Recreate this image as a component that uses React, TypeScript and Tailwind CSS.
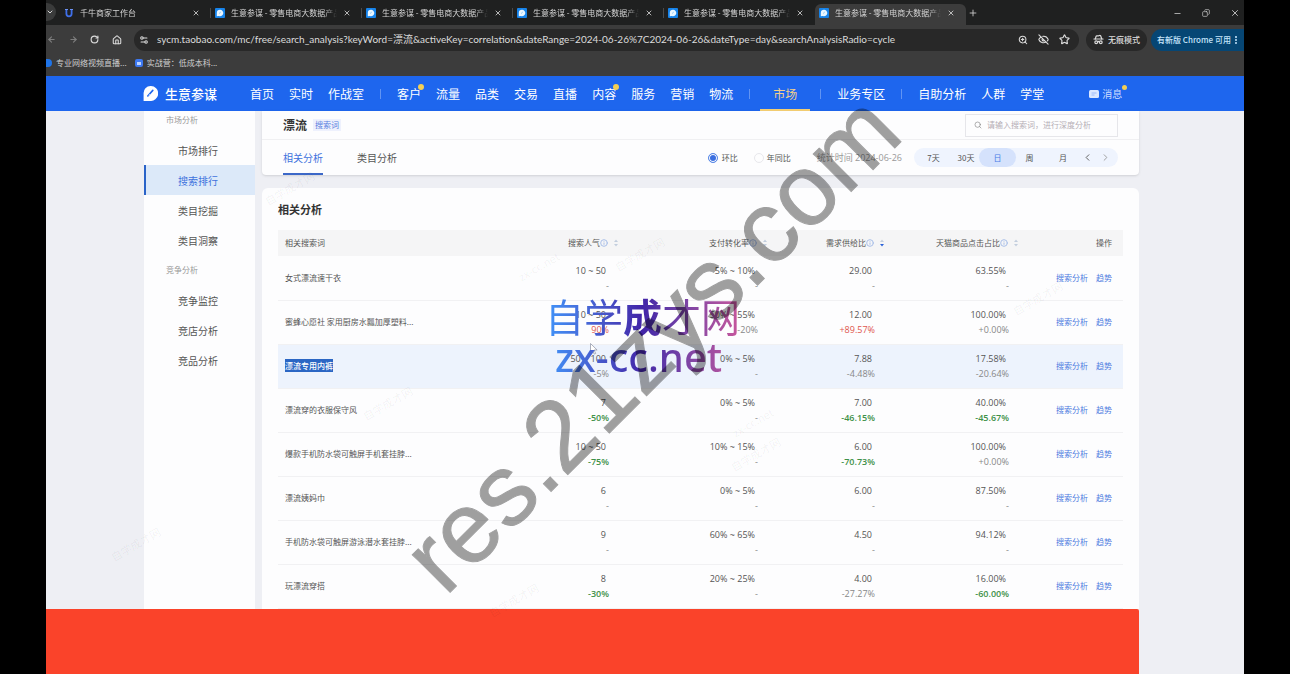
import {
  ArrowLeft,
  ArrowRight,
  ChevronDown,
  ChevronLeft,
  ChevronRight,
  Copy,
  EllipsisVertical,
  EyeOff,
  HatGlasses,
  House,
  Info,
  Minus,
  Plus,
  RotateCw,
  Search,
  Settings2,
  Star,
  X,
  ZoomIn,
} from "lucide-react";

interface IDelta {
  text: string;
  tone?: "up" | "down";
}

interface IRow {
  keyword: string;
  selected?: boolean;
  cells: [string, IDelta][];
}

interface INavItem {
  label: string;
  dot?: boolean;
  active?: boolean;
  divider?: boolean;
}

const none: IDelta = { text: "-" };

const tabs = [
  "千牛商家工作台",
  "生意参谋 - 零售电商大数据产品平台",
  "生意参谋 - 零售电商大数据产品平台",
  "生意参谋 - 零售电商大数据产品平台",
  "生意参谋 - 零售电商大数据产品平台",
  "生意参谋 - 零售电商大数据产品平台",
];

const navItems: INavItem[] = [
  { label: "首页" },
  { label: "实时" },
  { label: "作战室", divider: true },
  { label: "客户", dot: true },
  { label: "流量" },
  { label: "品类" },
  { label: "交易" },
  { label: "直播" },
  { label: "内容", dot: true },
  { label: "服务" },
  { label: "营销" },
  { label: "物流", divider: true },
  { label: "市场", active: true, divider: true },
  { label: "业务专区", divider: true },
  { label: "自助分析" },
  { label: "人群" },
  { label: "学堂" },
];

const columns = ["搜索人气", "支付转化率", "需求供给比", "天猫商品点击占比"];

const rows: IRow[] = [
  {
    keyword: "女式漂流速干衣",
    cells: [["10 ~ 50", none], ["5% ~ 10%", none], ["29.00", none], ["63.55%", none]],
  },
  {
    keyword: "蜜蜂心愿社 家用厨房水瓢加厚塑料...",
    cells: [
      ["10 ~ 50", { text: "90%", tone: "up" }],
      ["50% ~ 55%", { text: "-20%" }],
      ["12.00", { text: "+89.57%", tone: "up" }],
      ["100.00%", { text: "+0.00%" }],
    ],
  },
  {
    keyword: "漂流专用内裤",
    selected: true,
    cells: [
      ["50 ~ 100", { text: "-5%" }],
      ["0% ~ 5%", none],
      ["7.88", { text: "-4.48%" }],
      ["17.58%", { text: "-20.64%" }],
    ],
  },
  {
    keyword: "漂流穿的衣服保守风",
    cells: [
      ["7", { text: "-50%", tone: "down" }],
      ["0% ~ 5%", none],
      ["7.00", { text: "-46.15%", tone: "down" }],
      ["40.00%", { text: "-45.67%", tone: "down" }],
    ],
  },
  {
    keyword: "爆款手机防水袋可触屏手机套挂脖...",
    cells: [
      ["10 ~ 50", { text: "-75%", tone: "down" }],
      ["10% ~ 15%", none],
      ["6.00", { text: "-70.73%", tone: "down" }],
      ["100.00%", { text: "+0.00%" }],
    ],
  },
  {
    keyword: "漂流姨妈巾",
    cells: [["6", none], ["0% ~ 5%", none], ["6.00", none], ["87.50%", none]],
  },
  {
    keyword: "手机防水袋可触屏游泳潜水套挂脖...",
    cells: [["9", none], ["60% ~ 65%", none], ["4.50", none], ["94.12%", none]],
  },
  {
    keyword: "玩漂流穿搭",
    cells: [
      ["8", { text: "-30%", tone: "down" }],
      ["20% ~ 25%", none],
      ["4.00", { text: "-27.27%" }],
      ["16.00%", { text: "-60.00%", tone: "down" }],
    ],
  },
];

const faintMarks = [
  { text: "zx-cc.net", left: 516, top: 258 },
  { text: "自学成才网", left: 612, top: 246 },
  { text: "自学成才网", left: 360, top: 395 },
  { text: "自学成才网", left: 728, top: 446 },
  { text: "zx-cc.net", left: 730, top: 414 },
  { text: "自学成才网", left: 108, top: 536 },
  { text: "自学成才网", left: 486, top: 592 },
  { text: "自学成才网", left: 1010, top: 290 },
  { text: "自学成才网", left: 262, top: 180 },
];

const ShopIcon = () => (
  <svg viewBox="0 0 10 10" className="size-[10px] shrink-0">
    <rect width="10" height="10" rx="1" fill="#1683ea" />
    <path d="M5 1.8a3.2 3.2 0 1 1-1 6.2L1.8 8.2V5A3.2 3.2 0 0 1 5 1.8Z" fill="#e9f6ff" />
    <path d="M4 5.6 5.8 4" stroke="#7cc0f7" strokeWidth="0.8" />
  </svg>
);

const QianniuIcon = () => (
  <svg viewBox="0 0 10 10" className="size-[10px] shrink-0" fill="none">
    <path d="M2.4 1.5v4.2a2.6 2.6 0 0 0 5.2 0V1.5" stroke="#3f6fe8" strokeWidth="1.8" />
    <path d="M1 1.5h3M6 1.5h3" stroke="#6d93f5" strokeWidth="1.2" />
  </svg>
);

const SortIcon = ({ active }: { active?: boolean }) => (
  <svg viewBox="0 0 6 8" className="h-2 w-[6px] shrink-0">
    <path d="M3 0.5 5 3H1Z" fill="#c3cede" />
    <path d="M3 7.5 5 5H1Z" fill={active ? "#2b62d9" : "#c3cede"} />
  </svg>
);

const TabStrip = () => (
  <div className="flex h-[25px] items-end bg-[#1f2020] text-[8px] text-[#d4d4d4]">
    <button aria-label="搜索标签页" className="mb-1 mr-1 flex h-[18px] w-[10px] items-center rounded-r-full bg-[#3a3b3b]">
      <ChevronDown size={8} strokeWidth={3} />
    </button>
    {tabs.map((title, i) => {
      const active = i === tabs.length - 1;
      return (
        <div
          key={i}
          className={
            "flex h-[21px] min-w-0 max-w-[151px] flex-1 items-center pb-[3px] pl-1 " +
            (active ? "rounded-t-md bg-[#3c3c3c]" : "")
          }
        >
          {i === 0 ? <QianniuIcon /> : <ShopIcon />}
          <span className="ml-[6px] min-w-0 flex-1 overflow-hidden whitespace-nowrap [mask-image:linear-gradient(to_right,black_88%,transparent)]">
            {title}
          </span>
          <button aria-label="关闭" className="ml-[6px] mr-[10px] shrink-0">
            <X size={8} strokeWidth={2.5} />
          </button>
          <i className={"h-[10px] w-px " + (active || i === tabs.length - 2 ? "" : "bg-[#4a4a4a]")} />
        </div>
      );
    })}
    <button aria-label="新标签页" className="mb-[7px] ml-[2px]">
      <Plus size={10} />
    </button>
    <div className="mb-[7px] ml-auto flex items-center gap-5 pr-1">
      <button aria-label="最小化"><Minus size={9} /></button>
      <button aria-label="还原"><Copy size={8} className="-scale-x-100" /></button>
      <button aria-label="关闭窗口"><X size={10} /></button>
    </div>
  </div>
);

const Toolbar = () => (
  <div className="flex h-[29px] items-center bg-[#3c3c3c] text-[#dcdcdc]">
    <div className="flex w-[88px] shrink-0 items-center justify-between pl-px pr-3">
      <button aria-label="后退" className="text-[#7d7d7d]"><ArrowLeft size={9} strokeWidth={3} /></button>
      <button aria-label="前进" className="text-[#7d7d7d]"><ArrowRight size={9} strokeWidth={3} /></button>
      <button aria-label="重新加载"><RotateCw size={9} strokeWidth={3} /></button>
      <button aria-label="主页"><House size={10} strokeWidth={2.5} /></button>
    </div>
    <div className="flex h-[22px] min-w-0 flex-1 items-center rounded-full bg-[#282828] px-[5px]">
      <Settings2 size={10} strokeWidth={2.5} className="shrink-0" />
      <input
        aria-label="地址"
        readOnly
        value="sycm.taobao.com/mc/free/search_analysis?keyWord=漂流&activeKey=correlation&dateRange=2024-06-26%7C2024-06-26&dateType=day&searchAnalysisRadio=cycle"
        className="ml-2 min-w-0 flex-1 bg-transparent font-[Lato,'Noto_Sans_CJK_SC',sans-serif] text-[10px] outline-none"
      />
      <div className="flex shrink-0 gap-[10px] pr-1">
        <button aria-label="缩放"><ZoomIn size={10} strokeWidth={2.5} /></button>
        <button aria-label="第三方 Cookie"><EyeOff size={11} strokeWidth={2.5} /></button>
        <button aria-label="收藏"><Star size={11} strokeWidth={2.5} /></button>
      </div>
    </div>
    <button className="ml-[7px] flex h-[22px] w-[61px] shrink-0 items-center gap-1 rounded-full bg-[#282828] pl-[7px] text-[8px] font-medium">
      <HatGlasses size={11} strokeWidth={2.5} />
      无痕模式
    </button>
    <button className="ml-1 flex h-[22px] w-[93px] shrink-0 items-center justify-between whitespace-nowrap rounded-l-full bg-[#064674] pl-[6px] pr-[3px] text-[8px] font-medium text-[#c5e4fb]">
      有新版 Chrome 可用
      <EllipsisVertical size={10} strokeWidth={3} />
    </button>
  </div>
);

const Bookmarks = () => (
  <div className="flex h-[22px] items-center bg-[#3c3c3c] pb-1 text-[8px] text-[#cfcfcf]">
    <a href="#live" className="flex items-center">
      <i className="mr-1 h-2 w-[6px] rounded-r-full bg-[#1f74e8]" />
      专业网络视频直播...
    </a>
    <a href="#camp" className="ml-2 flex items-center gap-1">
      <i className="flex size-2 items-center justify-center rounded-[2px] bg-[#3c78f0]">
        <i className="h-[3px] w-1 bg-[#bcd3ff]" />
      </i>
      实战营：低成本科...
    </a>
  </div>
);

const Navbar = () => (
  <nav className="flex h-[35px] items-center whitespace-nowrap bg-[#1e66ee] pl-[97px] text-[12px] text-white">
    <a href="#home" className="flex w-[107px] shrink-0 items-center gap-[7px] text-[13px] font-medium">
      <svg viewBox="0 0 15 15" className="size-[15px]">
        <path d="M7.5 0a7.5 7.5 0 1 1-1 14.9L0.6 15V7.5A7 7 0 0 1 7.5 0Z" fill="#fff" />
        <path d="m4.8 10 5-5.6" stroke="#1e66ee" strokeWidth="1.6" strokeLinecap="round" />
        <path d="m5.8 9.4 1.2-1.3" stroke="#fff" strokeWidth="0.7" />
      </svg>
      生意参谋
    </a>
    <div className="flex h-full items-center gap-[15px]">
      {navItems.map(({ label, dot, active, divider }) => (
        <div key={label} className="flex h-full items-center">
          <a
            href="#nav"
            className={
              active
                ? "-mx-[6px] flex h-full w-[50px] items-center justify-center border-b-2 border-[#f5cf73] pt-[2px] text-[#f3d08a]"
                : "relative"
            }
          >
            {label}
            {dot && <i className="absolute -right-[3px] -top-px size-[6px] rounded-full bg-[#f3cf55]" />}
          </a>
          {divider && <i className="ml-4 mr-px h-[10px] w-px bg-white/30" />}
        </div>
      ))}
    </div>
    <a href="#msg" className="relative ml-[45px] flex items-center gap-[3px] text-[10px] text-[#cfdeff]">
      <svg viewBox="0 0 10 8" className="h-2 w-[10px]">
        <rect width="10" height="8" rx="1.5" fill="#dbe7ff" />
        <path d="M2.5 3h5M2.5 5h3" stroke="#8db0f7" strokeWidth="0.8" />
      </svg>
      消息
      <i className="absolute -right-[5px] -top-[1px] size-[5px] rounded-full bg-[#f3cf55]" />
    </a>
  </nav>
);

const SideItem = ({ label, active }: { label: string; active?: boolean }) => (
  <a
    href="#side"
    className={
      "flex h-[30px] items-center border-l-2 pl-8 text-[10px] " +
      (active ? "border-[#2a63c8] bg-[#dce9f9] text-[#3f72dd]" : "border-transparent text-[#555]")
    }
  >
    {label}
  </a>
);

const Sidebar = () => (
  <aside className="w-[111px] shrink-0 bg-[#fdfdfe]">
    <h4 className="h-6 pl-[22px] text-[8px] leading-[18px] text-[#999]">市场分析</h4>
    <SideItem label="市场排行" />
    <SideItem label="搜索排行" active />
    <SideItem label="类目挖掘" />
    <SideItem label="类目洞察" />
    <h4 className="h-[30px] pl-[22px] text-[8px] leading-[30px] text-[#999]">竞争分析</h4>
    <SideItem label="竞争监控" />
    <SideItem label="竞店分析" />
    <SideItem label="竞品分析" />
  </aside>
);

const FilterCard = () => (
  <section className="rounded-b-sm bg-[#fdfdfe] shadow-sm">
    <div className="flex h-[29px] items-center border-b border-[#f0f0f2] px-[21px]">
      <h1 className="text-[12px] font-bold text-[#333]">漂流</h1>
      <span className="ml-[6px] bg-[#eef1fd] px-[2px] text-[8px] leading-3 text-[#5a7fe0]">搜索词</span>
      <label className="ml-auto flex h-[23px] w-[153px] items-center gap-[5px] border border-[#e6e6ea] pl-2">
        <Search size={8} className="text-[#888]" />
        <input
          aria-label="搜索词"
          placeholder="请输入搜索词，进行深度分析"
          className="min-w-0 flex-1 bg-transparent text-[8px] outline-none placeholder:text-[#b5adb5]"
        />
      </label>
    </div>
    <div className="flex h-[35px] items-center px-[21px] text-[10px] text-[#555]">
      <button className="h-full border-b-2 border-[#3c68c8] pt-[2px] text-[#3f72dd]">相关分析</button>
      <button className="ml-[34px]">类目分析</button>
      <div className="ml-auto flex items-center text-[8px]">
        <label className="flex items-center gap-1">
          <input
            type="radio"
            name="cmp"
            defaultChecked
            className="size-[10px] appearance-none rounded-full border border-[#5b8be8] checked:bg-[#3b6fe0] checked:shadow-[inset_0_0_0_1px_#fff]"
          />
          环比
        </label>
        <label className="ml-4 flex items-center gap-[3px]">
          <input type="radio" name="cmp" className="size-[10px] appearance-none rounded-full border border-[#e8e8ec]" />
          年同比
        </label>
        <span className="ml-[26px] font-['Open_Sans','Noto_Sans_CJK_SC',sans-serif] text-[9px] text-[#999]">
          统计时间 2024-06-26
        </span>
        <div className="ml-3 flex h-[19px] w-[204px] items-center rounded-full bg-[#eff4fe] pl-3">
          <button className="w-[15px]">7天</button>
          <button className="ml-3 w-[26px]">30天</button>
          <button className="flex h-[19px] w-[37px] items-center justify-center rounded-full bg-[#d5e2fc] text-[#4a7be6]">日</button>
          <button className="w-[27px]">周</button>
          <button className="ml-1 w-8">月</button>
          <button aria-label="上一天" className="ml-[3px]"><ChevronLeft size={11} /></button>
          <button aria-label="下一天" className="ml-[7px] text-[#999]"><ChevronRight size={11} /></button>
        </div>
      </div>
    </div>
  </section>
);

const deltaClass = ({ tone }: IDelta) => {
  if (tone === "up") return "text-[#e0564d]";
  if (tone === "down") return "font-semibold text-[#3f9149]";
  return "text-[#888]";
};

const KeywordTable = () => (
  <section className="mt-[13px] flex-1 rounded-t-md bg-[#fdfdfe] px-4">
    <h2 className="h-[42px] text-[11px] font-bold leading-[42px] text-[#333]">相关分析</h2>
    <table className="w-full table-fixed text-[8px] text-[#555]">
      <colgroup>
        <col />
        <col className="w-[149px]" />
        <col className="w-[149px]" />
        <col className="w-[117px]" />
        <col className="w-[134px]" />
        <col className="w-[104px]" />
      </colgroup>
      <thead>
        <tr className="h-[26px] bg-[#f5f5f6]">
          <th className="pl-[7px] text-left font-normal">相关搜索词</th>
          {columns.map((name) => (
            <th key={name} className="font-normal">
              <div className="flex items-center justify-end">
                {name}
                <Info size={8} strokeWidth={3} className="text-[#a9bfe8]" />
                <span className="ml-[5px]">
                  <SortIcon active={name === "需求供给比"} />
                </span>
              </div>
            </th>
          ))}
          <th className="pr-[11px] text-right font-normal">操作</th>
        </tr>
      </thead>
      <tbody>
        {rows.map((row) => (
          <tr key={row.keyword} className={"h-11 border-b border-[#f1f1f3] " + (row.selected ? "bg-[#edf3fd]" : "")}>
            <td className="whitespace-nowrap pl-[7px]">
              {row.selected ? (
                <span className="bg-[#2b66c4] py-px font-medium text-white">{row.keyword}</span>
              ) : (
                row.keyword
              )}
            </td>
            {row.cells.map(([value, delta], i) => (
              <td key={i} className="text-right font-['Open_Sans',sans-serif] text-[9px] leading-[15px]">
                <div className="pr-[13px]">{value}</div>
                <div className={"pr-[10px] " + deltaClass(delta)}>{delta.text}</div>
              </td>
            ))}
            <td className="pr-[11px] text-right text-[#4d7be0]">
              <a href="#analysis">搜索分析</a>
              <a href="#trend" className="ml-2">趋势</a>
            </td>
          </tr>
        ))}
      </tbody>
    </table>
  </section>
);

const Watermarks = () => (
  <div className="pointer-events-none select-none whitespace-nowrap">
    {faintMarks.map((mark, i) => (
      <span
        key={i}
        className="absolute -rotate-[30deg] text-[11px] text-black/5"
        style={{ left: mark.left, top: mark.top }}
      >
        {mark.text}
      </span>
    ))}
    <svg viewBox="0 0 8 12" className="absolute left-[590px] top-[343px] h-3 w-2">
      <path d="M0.5 0.5v9l2.2-2 1.6 3.6 1.4-.6-1.6-3.5h3Z" fill="#fff" stroke="#8a8fa0" strokeWidth="0.7" />
    </svg>
    <div className="absolute left-[545px] top-[293px] bg-linear-to-r from-[#3f95fa] via-[#4224a8] via-50% to-[#c8569c] bg-clip-text text-transparent">
      <p className="text-[39px] leading-[44px]">自学<b>成</b>才网</p>
      <p className="-mt-[2px] pl-[10px] font-['Noto_Sans',sans-serif] text-[40px] font-medium leading-[44px]">zx-cc.net</p>
    </div>
    <span className="absolute left-[446px] top-[512px] origin-[0_86px] -rotate-45 font-['Liberation_Sans',sans-serif] text-[101px] leading-none text-black opacity-37 [-webkit-text-stroke:1px_black]">
      res.21zys.com
    </span>
  </div>
);

const App = () => {
  return (
    <div className="relative flex min-h-screen flex-col overflow-hidden bg-black px-[46px] font-['Noto_Sans_CJK_SC',sans-serif]">
      <header>
        <TabStrip />
        <Toolbar />
        <Bookmarks />
        <Navbar />
      </header>
      <div className="flex gap-[7px] bg-[#eeeff4] pl-[98px] pr-[105px]">
        <Sidebar />
        <main className="flex min-w-0 flex-1 flex-col">
          <FilterCard />
          <KeywordTable />
        </main>
      </div>
      <footer className="flex min-h-16 flex-1 bg-[#eeeff4] pr-[105px]">
        <div className="flex-1 rounded-tr-[2px] bg-[#fa432a]" />
      </footer>
      <Watermarks />
    </div>
  );
};

export default App;
